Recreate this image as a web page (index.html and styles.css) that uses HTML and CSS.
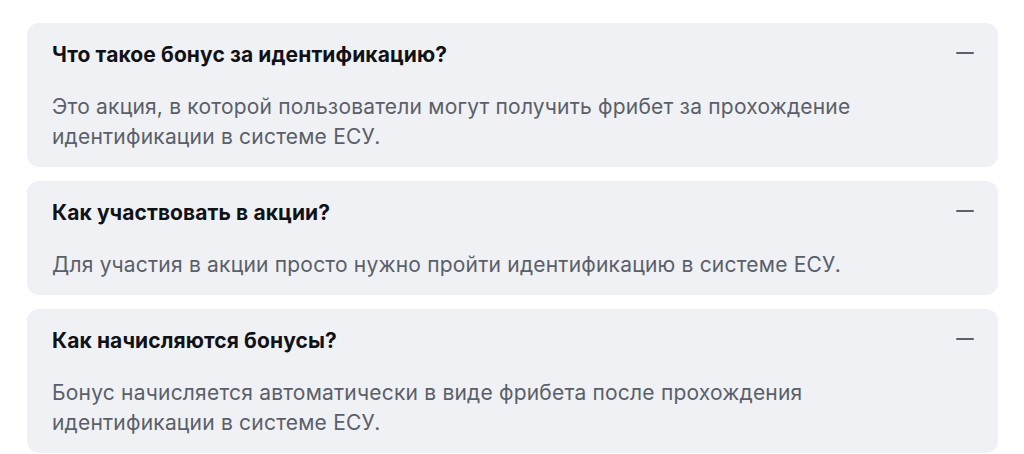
FILE: index.html
```html
<!DOCTYPE html>
<html lang="ru">
<head>
<meta charset="utf-8">
<link rel="stylesheet" href="styles.css">
</head>
<body>
<div class="faq">
  <div class="item">
    <div class="head">
      <h3 class="q">Что такое бонус за идентификацию?</h3>
      <span class="minus"></span>
    </div>
    <p class="a">Это акция, в которой пользователи могут получить фрибет за прохождение идентификации в системе ЕСУ.</p>
  </div>
  <div class="item">
    <div class="head">
      <h3 class="q">Как участвовать в акции?</h3>
      <span class="minus"></span>
    </div>
    <p class="a">Для участия в акции просто нужно пройти идентификацию в системе ЕСУ.</p>
  </div>
  <div class="item">
    <div class="head">
      <h3 class="q">Как начисляются бонусы?</h3>
      <span class="minus"></span>
    </div>
    <p class="a">Бонус начисляется автоматически в виде фрибета после прохождения идентификации в системе ЕСУ.</p>
  </div>
</div>
</body>
</html>
```
FILE: styles.css
```css
html, body {
  margin: 0;
  padding: 0;
  background: #ffffff;
}
body {
  font-family: Inter, "Noto Sans", sans-serif;
}
.faq {
  display: flex;
  flex-direction: column;
  gap: 14px;
  padding: 23px 26px 0 27px;
}
.item {
  background: #f0f1f4;
  border-radius: 12px;
  padding: 20px 24px 15px 25px;
}
.head {
  display: flex;
  align-items: center;
  justify-content: space-between;
  height: 24px;
}
.q {
  margin: 0;
  font-size: 21px;
  font-weight: 700;
  line-height: 24px;
  color: #111216;
  letter-spacing: 0.1px;
}
.minus {
  width: 18px;
  height: 2px;
  background: #5b616d;
  border-radius: 1px;
  margin-top: -4px;
}
.a {
  margin: 25px 0 0;
  font-size: 21px;
  line-height: 30px;
  color: #5a5f6a;
  letter-spacing: 0.2px;
  max-width: 830px;
}
```
